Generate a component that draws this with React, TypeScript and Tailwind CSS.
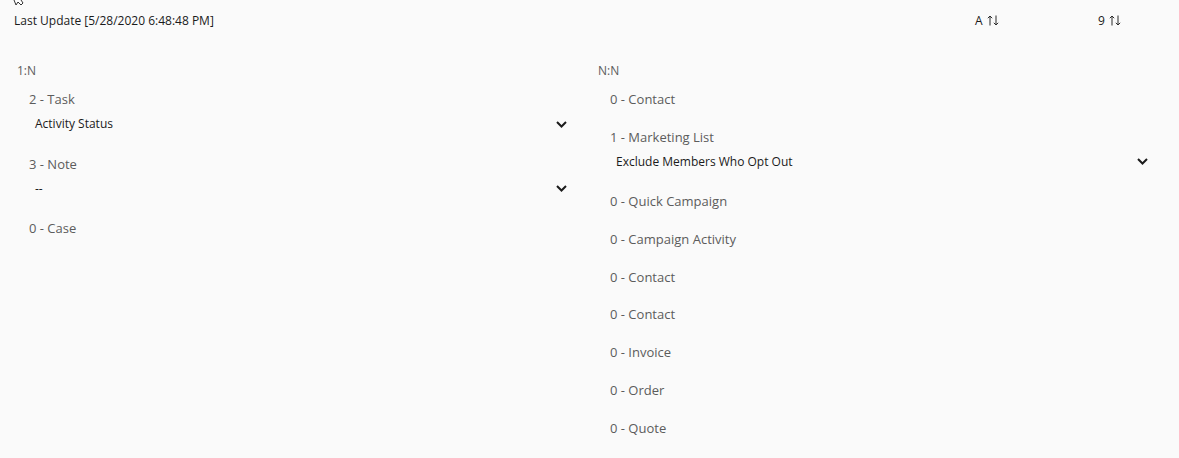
import React from 'react';

type Rel = { label: string; select?: string };

const oneToMany: Rel[] = [
  { label: '2 - Task', select: 'Activity Status' },
  { label: '3 - Note', select: '--' },
  { label: '0 - Case' },
];

const manyToMany: Rel[] = [
  { label: '0 - Contact' },
  { label: '1 - Marketing List', select: 'Exclude Members Who Opt Out' },
  { label: '0 - Quick Campaign' },
  { label: '0 - Campaign Activity' },
  { label: '0 - Contact' },
  { label: '0 - Contact' },
  { label: '0 - Invoice' },
  { label: '0 - Order' },
  { label: '0 - Quote' },
];

function Chevron() {
  return (
    <svg width="11" height="7" viewBox="0 0 11 7" className="text-[#1b1b1b]">
      <polyline points="1,1 5.5,5.5 10,1" fill="none" stroke="currentColor" strokeWidth="2" />
    </svg>
  );
}

function SortArrows() {
  return (
    <svg width="12" height="11" viewBox="0 0 12 11" className="inline-block ml-[4px] align-[-1px] text-[#2a2a2a]">
      <path d="M3 10.5V1M0.8 3.2L3 1l2.2 2.2" fill="none" stroke="currentColor" strokeWidth="1" />
      <path d="M9 0.5V10M6.8 7.8L9 10l2.2-2.2" fill="none" stroke="currentColor" strokeWidth="1" />
    </svg>
  );
}

function Item({ rel }: { rel: Rel }) {
  return (
    <div className="pl-3 pb-[17.7px]">
      <div className="h-5 leading-5 text-[13px] text-[#5c5c5c]">{rel.label}</div>
      {rel.select && (
        <div className="mt-[3px] h-6 flex items-center justify-between pl-[6px] pr-[8px] text-[12px] text-[#1b1b1b]">
          <span>{rel.select}</span>
          <Chevron />
        </div>
      )}
    </div>
  );
}

function Column({ title, items }: { title: string; items: Rel[] }) {
  return (
    <div className="w-[581px] pl-[17px] pr-[6px]">
      <div className="h-5 leading-5 text-[12px] text-[#5c5c5c] mb-2">{title}</div>
      {items.map((r, i) => (
        <Item key={i} rel={r} />
      ))}
    </div>
  );
}

export default function App() {
  return (
    <div
      className="relative w-[1179px] h-[458px] overflow-hidden bg-[#fafafa]"
      style={{ fontFamily: '"Segoe UI", "Open Sans", "Noto Sans", sans-serif' }}
    >
      {/* mouse cursor tail peeking in from above */}
      <svg className="absolute left-[13px] top-0" width="12" height="6" viewBox="0 0 12 6">
        <path d="M1 0 L3 5 L5 2 L8 5 L10 3 L8 0" fill="#fff" stroke="#333" strokeWidth="1" />
      </svg>

      <div className="h-10 flex items-center text-[12px] text-[#1b1b1b] pt-[1px]">
        <div className="pl-[14px] flex-1">Last Update [5/28/2020 6:48:48 PM]</div>
        <div className="w-[123px]">
          A<SortArrows />
        </div>
        <div className="w-[81px]">
          9<SortArrows />
        </div>
      </div>

      <div className="flex mt-[21px]">
        <Column title="1:N" items={oneToMany} />
        <Column title="N:N" items={manyToMany} />
      </div>
    </div>
  );
}
